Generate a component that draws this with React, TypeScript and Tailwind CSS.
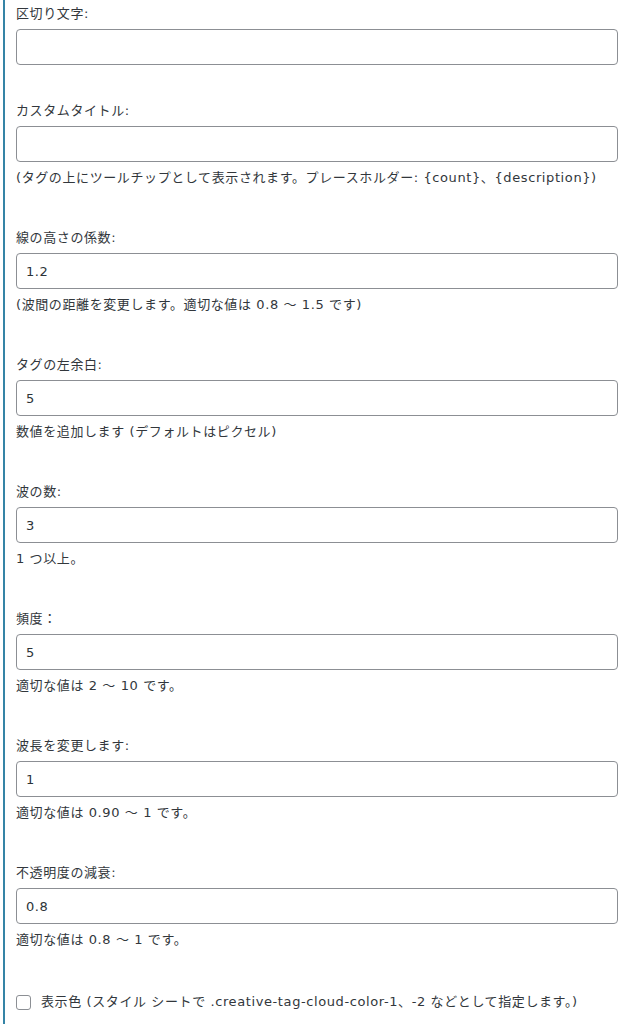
interface Field {
  label: string
  value: string
  help?: string
}

const FIELDS: Field[] = [
  { label: '区切り文字:', value: '' },
  {
    label: 'カスタムタイトル:',
    value: '',
    help: '(タグの上にツールチップとして表示されます。プレースホルダー: {count}、{description})',
  },
  { label: '線の高さの係数:', value: '1.2', help: '(波間の距離を変更します。適切な値は 0.8 ～ 1.5 です)' },
  { label: 'タグの左余白:', value: '5', help: '数値を追加します (デフォルトはピクセル)' },
  { label: '波の数:', value: '3', help: '1 つ以上。' },
  { label: '頻度：', value: '5', help: '適切な値は 2 ～ 10 です。' },
  { label: '波長を変更します:', value: '1', help: '適切な値は 0.90 ～ 1 です。' },
  { label: '不透明度の減衰:', value: '0.8', help: '適切な値は 0.8 ～ 1 です。' },
]

function FieldRow({ field }: { field: Field }) {
  return (
    <div className={field.help ? 'mb-[40px]' : 'mb-[36px]'}>
      <label className="block h-[20px] leading-[20px] mb-[5px]">{field.label}</label>
      <input
        type="text"
        defaultValue={field.value}
        className="block w-full h-[36px] px-[9px] bg-white border border-[#8c8f94] rounded-[4px] text-[13px] tracking-[0.6px] text-[#2c3338] outline-none"
      />
      {field.help && <p className="h-[20px] leading-[20px] mt-[6px] whitespace-nowrap">{field.help}</p>}
    </div>
  )
}

export default function App() {
  return (
    <div className="min-h-[1024px] bg-white font-['DejaVu_Sans','Noto_Sans_CJK_JP',sans-serif] text-[13px] tracking-[0.6px] text-[#32373c]">
      <div className="ml-[3px] border-l-2 border-[#3584a6] pl-[11px] pr-[5px] pt-[4px] min-h-[1024px]">
        {FIELDS.map((f) => (
          <FieldRow key={f.label} field={f} />
        ))}
        <label className="flex items-center gap-[10px] h-[24px] mt-[2px] whitespace-nowrap">
          <input
            type="checkbox"
            className="appearance-none w-[15px] h-[15px] shrink-0 border border-[#8c8f94] rounded-[3px] bg-white"
          />
          <span>表示色 (スタイル シートで .creative-tag-cloud-color-1、-2 などとして指定します。)</span>
        </label>
      </div>
    </div>
  )
}
